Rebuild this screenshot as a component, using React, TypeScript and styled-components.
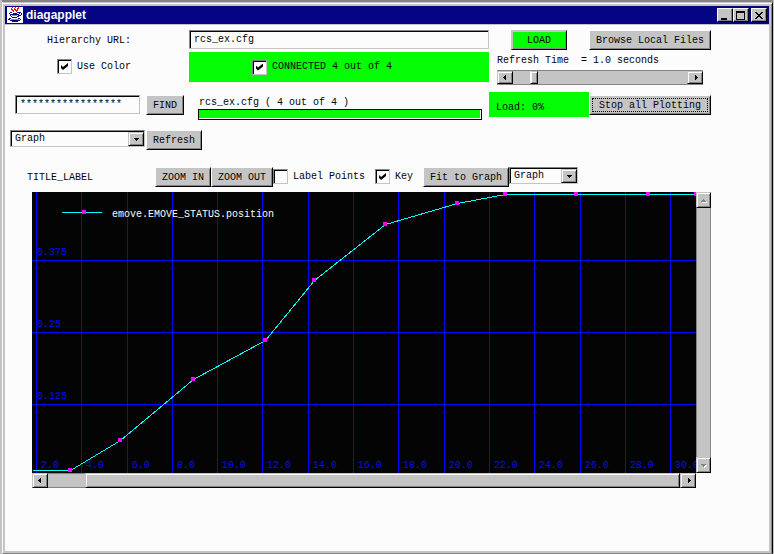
import React, { useId } from 'react';
import styled, { createGlobalStyle, css } from 'styled-components';

const c = {
  face: '#c4c4c4',
  paper: '#fcfcfc',
  dark: '#848484',
  black: '#040404',
  green: '#04fc04',
  navy: '#040484',
  blue: '#0404fc',
  cyan: '#04fcfc',
  magenta: '#fc04fc',
};
const mono = '"Liberation Mono", "Courier New", monospace';

const GlobalStyle = createGlobalStyle`
  *, *::before, *::after { box-sizing: border-box; }
  body { margin: 0; background: ${c.face}; }
  button, input, select { margin: 0; font: inherit; color: inherit; border-radius: 0; }
`;

const raised = css`
  background: ${c.face};
  border: 1px solid;
  border-color: ${c.face} ${c.black} ${c.black} ${c.face};
  box-shadow: inset 1px 1px ${c.paper}, inset -1px -1px ${c.dark};
`;
const sunken = css`
  background: ${c.paper};
  border: 1px solid;
  border-color: ${c.dark} ${c.face} ${c.face} ${c.dark};
  box-shadow: inset 1px 1px ${c.black};
`;

const Desktop = styled.div`
  display: flex;
  flex-direction: column;
  min-height: 100vh;
  padding: 0 1px 0 2px;
  background: ${c.face};
  font: 10px/12px ${mono};
  color: ${c.black};
`;
const Behind = styled.div`
  height: 2px;
  background: ${c.dark};
`;
const Window = styled.div`
  flex: 1;
  display: flex;
  flex-direction: column;
  padding: 2px;
  border: 1px solid;
  border-color: ${c.face} ${c.black} ${c.dark} ${c.paper};
  box-shadow: inset 0 1px ${c.paper}, inset -1px 0 ${c.dark};
  background: ${c.face};
`;
const TitleBar = styled.header`
  display: flex;
  align-items: center;
  height: 18px;
  margin-top: 1px;
  margin-right: 1px;
  padding: 0 2px;
  gap: 3px;
  background: ${c.navy};
  color: ${c.paper};
  font: bold 12px/18px "Liberation Sans", Arial, sans-serif;
`;
const Title = styled.h1`
  flex: 1;
  margin: 0;
  font: inherit;
`;
const WindowButtons = styled.div`
  display: flex;
`;
const CaptionButton = styled.button<{ $apart?: boolean }>`
  ${raised}
  border-color: ${c.paper} ${c.black} ${c.black} ${c.paper};
  box-shadow: inset -1px -1px ${c.dark};
  width: 16px;
  height: 14px;
  margin-left: ${p => (p.$apart ? 2 : 0)}px;
  padding: 0;
  display: grid;
  place-items: center;
`;
const Content = styled.main`
  flex: 1;
  margin: 1px 1px 0 0;
  padding: 5px 58px 20px 5px;
  background: ${c.paper};
`;

const Panel = styled.div`
  display: grid;
  grid-template-columns: 179px minmax(0, 1fr) 222px;
  grid-template-rows: 22px 40px 28px;
`;
const LabelCell = styled.div`
  display: flex;
  justify-content: center;
  align-items: flex-start;
  padding: 5px 21px 0 0;
`;
const ColorCell = styled(LabelCell)`
  padding: 7px 11px 0 0;
`;
const Line = styled.div<{ $gap?: number }>`
  display: flex;
  align-items: flex-start;
  gap: ${p => p.$gap ?? 0}px;
`;
const Field = styled.input`
  ${sunken}
  min-width: 0;
  height: 19px;
  padding: 0 4px;
  outline: 0;
`;
const UrlField = styled(Field)`
  width: 100%;
`;
const FindField = styled(Field)`
  width: 125px;
`;
const FindLine = styled(Line)`
  padding: 3px 0 0 5px;
`;
const Button = styled.button<{ $green?: boolean }>`
  ${raised}
  background: ${p => (p.$green ? c.green : c.face)};
  border-color: ${p => (p.$green ? c.face : c.paper)} ${c.black} ${c.black} ${p => (p.$green ? c.face : c.paper)};
  box-shadow: inset 1px 1px ${c.face}, inset -1px -1px ${c.dark};
  height: 20px;
  padding: 2px 6px 0;
  white-space: nowrap;
`;
const LoadButton = styled(Button)`
  width: 56px;
`;
const BrowseButton = styled(Button)`
  width: 122px;
`;
const StopButton = styled(BrowseButton)`
  margin-top: 3px;
  outline: 1px dotted ${c.black};
  outline-offset: -4px;
`;
const Actions = styled.div`
  display: flex;
  justify-content: space-between;
  padding-left: 22px;
`;
const CheckLabel = styled.label`
  display: inline-flex;
  align-items: center;
  gap: 5px;
  white-space: nowrap;
`;
const CheckBox = styled.input`
  ${sunken}
  appearance: none;
  width: 15px;
  height: 15px;
  display: grid;
  place-items: center;
  &:checked::before {
    content: '';
    width: 7px;
    height: 7px;
    background: ${c.black};
    clip-path: polygon(0 29%, 29% 57%, 100% 0, 100% 43%, 29% 100%, 0 71%);
  }
`;
const Connected = styled.div`
  display: flex;
  justify-content: center;
  align-items: center;
  height: 30px;
  padding-right: 34px;
  background: ${c.green};
`;
const Refresh = styled.div`
  display: flex;
  flex-direction: column;
  gap: 3px;
  padding: 3px 8px 0;
  white-space: pre;
`;
const Slider = styled.div`
  display: flex;
  height: 15px;
  background: ${c.face};
  border-top: 1px solid ${c.dark};
  border-bottom: 1px solid ${c.dark};
`;
const Range = styled.input`
  appearance: none;
  flex: 1;
  min-width: 0;
  height: 13px;
  background: transparent;
  &::-webkit-slider-thumb {
    appearance: none;
    ${raised}
    border-left-color: ${c.paper};
    width: 8px;
    height: 13px;
  }
`;
const ArrowButton = styled.button<{ $tall?: boolean }>`
  ${raised}
  flex: none;
  width: ${p => (p.$tall ? '15px' : '16px')};
  height: ${p => (p.$tall ? '16px' : 'auto')};
  padding: 0;
  display: grid;
  place-items: center;
`;
const Progress = styled.div`
  display: flex;
  flex-direction: column;
  padding: 5px 7px 0 9px;
  white-space: pre;
`;
const Bar = styled.div`
  height: 12px;
  padding: 0 1px 1px 0;
  border: 1px solid ${c.black};
  background: ${c.paper};
`;
const BarFill = styled.div`
  height: 100%;
  background: ${c.green};
`;
const ProgressText = styled.span`
  padding-left: 1px;
`;
const LoadLevel = styled.div`
  flex: 1;
  height: 25px;
  padding: 10px 7px 0;
  background: ${c.green};
`;
const SelectBox = styled.span<{ $width: number }>`
  position: relative;
  display: block;
  width: ${p => p.$width}px;
  height: 17px;
`;
const Select = styled.select`
  ${sunken}
  appearance: none;
  width: 100%;
  height: 17px;
  padding: 1px 18px 0 4px;
  outline: 0;
`;
const DropMark = styled.span`
  ${raised}
  position: absolute;
  top: 2px;
  right: 1px;
  width: 16px;
  height: 14px;
  display: grid;
  place-items: center;
  pointer-events: none;
`;
const ViewLine = styled(Line)`
  margin-top: 10px;
`;
const Toolbar = styled(Line)`
  margin-top: 17px;
  padding-left: 17px;
`;
const GraphTitle = styled.h2`
  width: 128px;
  margin: 5px 0 0;
  font: inherit;
`;
const ToolCheck = styled(CheckLabel)<{ $width: number }>`
  width: ${p => p.$width}px;
  margin-top: 2px;
`;
const Plot = styled.section`
  display: grid;
  grid-template-columns: minmax(0, 1fr) 15px;
  margin: 5px 0 0 22px;
`;
const Chart = styled.svg`
  display: block;
  width: 100%;
  height: auto;
  background: ${c.black};
  font: 10px ${mono};
`;
const VScroll = styled.div`
  display: flex;
  flex-direction: column;
  justify-content: space-between;
  background: ${c.face};
  box-shadow: inset 1px 0 ${c.dark}, inset -1px 0 ${c.dark};
`;
const HScroll = styled.div`
  display: flex;
  height: 15px;
  background: ${c.face};
  box-shadow: inset 0 1px ${c.dark}, inset 0 -1px ${c.dark};
`;
const HThumb = styled.div`
  ${raised}
  flex: 1;
  margin-left: 37px;
`;

type Dir = 'left' | 'right' | 'up' | 'down';
const arrows: Record<Dir, string> = {
  left: 'M4 1v5H3V5H2V4H1V3h1V2h1V1z',
  right: 'M3 1v5h1V5h1V4h1V3H5V2H4V1z',
  up: 'M1 5h5V4H5V3H4V2H3v1H2v1H1z',
  down: 'M1 2h5v1H5v1H4v1H3V4H2V3H1z',
};
function Arrow({ dir, off }: { dir: Dir; off?: boolean }) {
  return (
    <svg width="7" height="7" viewBox="0 0 7 7" shapeRendering="crispEdges" overflow="visible" aria-hidden="true">
      {off && <path d={arrows[dir]} fill={c.paper} transform="translate(1 1)" />}
      <path d={arrows[dir]} fill={off ? c.dark : c.black} />
    </svg>
  );
}

function JavaIcon() {
  return (
    <svg width="16" height="16" viewBox="0 0 16 16" shapeRendering="crispEdges" aria-hidden="true">
      <path fill="#fcfcfc" d="M0 0h16v16H0z" />
      <path fill="none" stroke="#fc0404" d="M5 .5h1M8 .5h1M11 .5h1M4 1.5h1M7 1.5h1M10 1.5h2M4 2.5h2M7 2.5h2M10 2.5h1M5 3.5h2M8 3.5h3M6 4.5h1M9 4.5h1" />
      <path fill="none" stroke={c.navy} d="M3 5.5h2M10 5.5h4M2 6.5h1M6 6.5h4M12 6.5h1M14 6.5h1M3 7.5h9M14 7.5h1M3 8.5h1M11 8.5h3M4 9.5h1M10 9.5h2M5 10.5h5M2 11.5h2M11 11.5h2M1 12.5h2M13 12.5h1M3 13.5h10M5 14.5h6" />
      <path fill="none" stroke="#8484c4" d="M5 8.5h5M4 12.5h8" />
    </svg>
  );
}

function DropDown({ label, width }: { label: string; width: number }) {
  return (
    <SelectBox $width={width}>
      <Select aria-label={label} defaultValue="Graph">
        <option>Graph</option>
      </Select>
      <DropMark><Arrow dir="down" /></DropMark>
    </SelectBox>
  );
}

const columns = [4, 49, 95, 140, 185, 230, 276, 321, 366, 412, 457, 502, 548, 593, 638];
const rows = [
  { y: 68, text: '0.375' },
  { y: 140, text: '0.25' },
  { y: 212, text: '0.125' },
];
const points = [
  [38, 278], [88, 248], [161, 187], [233, 148], [282, 88], [353, 32],
  [425, 11], [473, 2], [544, 2], [616, 2], [664, 2],
];

function Graph() {
  const path = [[0, 278], ...points].map(([x, y]) => `${x},${y}`).join(' ');
  return (
    <Chart viewBox="0 0 664 281" role="img" aria-label="emove.EMOVE_STATUS.position">
      <g fill={c.blue} shapeRendering="crispEdges">
        {columns.map(x => <rect key={x} x={x} y="0" width="1" height="281" />)}
        {rows.map(r => <rect key={r.y} x="0" y={r.y} width="664" height="1" />)}
      </g>
      <g fill={c.blue}>
        {rows.map(r => <text key={r.y} x="5" y={r.y - 5}>{r.text}</text>)}
        {columns.map((x, i) => <text key={x} x={x + 5} y="276">{`${(i + 1) * 2}.0`}</text>)}
      </g>
      <g shapeRendering="crispEdges">
        <polyline points={path} transform="translate(.5 .5)" fill="none" stroke={c.cyan} />
        <rect x="30" y="20" width="40" height="1" fill={c.cyan} />
        {[[52, 20], ...points].map(([x, y]) => (
          <rect key={x} x={x - 2} y={y - 2} width="4" height="4" fill={c.magenta} />
        ))}
      </g>
      <text x="80" y="25" fill={c.paper}>emove.EMOVE_STATUS.position</text>
    </Chart>
  );
}

export default function App() {
  const url = useId();
  const refresh = useId();
  return (
    <Desktop>
      <GlobalStyle />
      <Behind />
      <Window>
        <TitleBar>
          <JavaIcon />
          <Title>diagapplet</Title>
          <WindowButtons>
            <CaptionButton aria-label="Minimize">
              <svg width="10" height="9" shapeRendering="crispEdges"><path fill={c.black} d="M1 7h6v2H1z" /></svg>
            </CaptionButton>
            <CaptionButton aria-label="Maximize">
              <svg width="10" height="9" shapeRendering="crispEdges"><path fill={c.black} fillRule="evenodd" d="M0 0h9v9H0zM1 2v6h7V2z" /></svg>
            </CaptionButton>
            <CaptionButton $apart aria-label="Close">
              <svg width="8" height="7" shapeRendering="crispEdges"><path fill={c.black} d="M0 0h2v1h1v1h2V1h1V0h2v1H7v1H6v1H5v1h1v1h1v1h1v1H6V6H5V5H3v1H2v1H0V6h1V5h1V4h1V3H2V2H1V1H0z" /></svg>
            </CaptionButton>
          </WindowButtons>
        </TitleBar>
        <Content>
          <Panel>
            <LabelCell><label htmlFor={url}>Hierarchy URL:</label></LabelCell>
            <div><UrlField id={url} defaultValue="rcs_ex.cfg" /></div>
            <Actions>
              <LoadButton $green>LOAD</LoadButton>
              <BrowseButton>Browse Local Files</BrowseButton>
            </Actions>

            <ColorCell>
              <CheckLabel><CheckBox type="checkbox" defaultChecked />Use Color</CheckLabel>
            </ColorCell>
            <Connected>
              <CheckLabel><CheckBox type="checkbox" defaultChecked />CONNECTED 4 out of 4</CheckLabel>
            </Connected>
            <Refresh>
              <label htmlFor={refresh}>{'Refresh Time  = 1.0 seconds'}</label>
              <Slider>
                <ArrowButton aria-label="Decrease"><Arrow dir="left" /></ArrowButton>
                <Range id={refresh} type="range" min="0" max="10" step="0.1" defaultValue="1" />
                <ArrowButton aria-label="Increase"><Arrow dir="right" /></ArrowButton>
              </Slider>
            </Refresh>

            <FindLine $gap={6}>
              <FindField aria-label="Find" defaultValue="*****************" />
              <Button>FIND</Button>
            </FindLine>
            <Progress>
              <ProgressText>rcs_ex.cfg ( 4 out of 4 )</ProgressText>
              <Bar role="progressbar" aria-label="Connection progress" aria-valuenow={100}><BarFill /></Bar>
            </Progress>
            <Line>
              <LoadLevel>Load: 0%</LoadLevel>
              <StopButton>Stop all Plotting</StopButton>
            </Line>
          </Panel>

          <ViewLine $gap={1}>
            <DropDown label="View" width={135} />
            <Button>Refresh</Button>
          </ViewLine>

          <Toolbar>
            <GraphTitle>TITLE_LABEL</GraphTitle>
            <Button>ZOOM IN</Button>
            <Button>ZOOM OUT</Button>
            <ToolCheck $width={102}><CheckBox type="checkbox" />Label Points</ToolCheck>
            <ToolCheck $width={48}><CheckBox type="checkbox" defaultChecked />Key</ToolCheck>
            <Button>Fit to Graph</Button>
            <DropDown label="Graph type" width={69} />
          </Toolbar>

          <Plot>
            <Graph />
            <VScroll>
              <ArrowButton $tall disabled aria-label="Scroll up"><Arrow dir="up" off /></ArrowButton>
              <ArrowButton $tall disabled aria-label="Scroll down"><Arrow dir="down" off /></ArrowButton>
            </VScroll>
            <HScroll>
              <ArrowButton aria-label="Scroll left"><Arrow dir="left" /></ArrowButton>
              <HThumb />
              <ArrowButton aria-label="Scroll right"><Arrow dir="right" /></ArrowButton>
            </HScroll>
          </Plot>
        </Content>
      </Window>
    </Desktop>
  );
}
